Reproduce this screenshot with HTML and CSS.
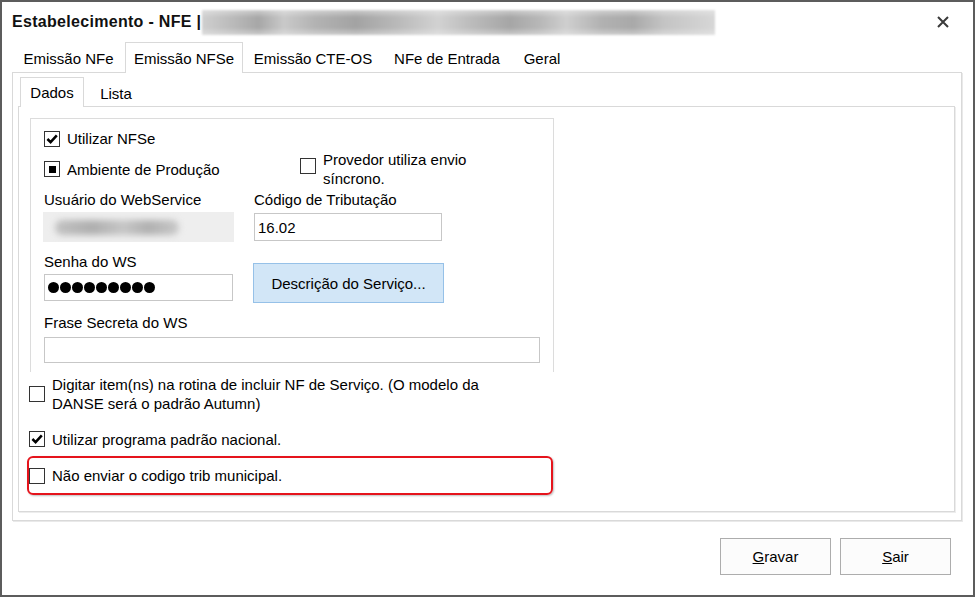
FILE: index.html
```html
<!DOCTYPE html>
<html lang="pt-BR">
<head>
<meta charset="utf-8">
<title>Estabelecimento - NFE</title>
<link rel="stylesheet" href="styles.css">
</head>
<body>
<div class="window">
  <div class="titlebar">
    <span class="title">Estabelecimento - NFE |</span>
    <span class="title-blur"></span>
    <svg class="close" width="12" height="12" viewBox="0 0 12 12"><path d="M1 1 L11 11 M11 1 L1 11" stroke="#3a3a3a" stroke-width="2" fill="none"/></svg>
  </div>

  <div class="tabctl">
    <div class="tabstrip">
      <div class="tab w1">Emissão NFe</div>
      <div class="tab active w2">Emissão NFSe</div>
      <div class="tab w3">Emissão CTE-OS</div>
      <div class="tab w4">NFe de Entrada</div>
      <div class="tab w5">Geral</div>
    </div>
    <div class="panel">
      <div class="subtabs">
        <div class="subtab active">Dados</div>
        <div class="subtab">Lista</div>
      </div>
      <div class="subpanel">
        <div class="group">
          <div class="chk r1">
            <span class="box"><svg width="14" height="14" viewBox="0 0 14 14"><path d="M2.4 7 L5.6 10.2 L11.8 3.4" stroke="#000" stroke-width="2.5" fill="none"/></svg></span>
            <span class="lbl">Utilizar NFSe</span>
          </div>
          <div class="row r2">
            <div class="col">
              <div class="chk tall">
                <span class="box"><span class="ind"></span></span>
                <span class="lbl">Ambiente de Produção</span>
              </div>
            </div>
            <div class="col">
              <div class="chk multi prov">
                <span class="box"></span>
                <span class="lbl">Provedor utiliza envio<br>síncrono.</span>
              </div>
            </div>
          </div>
          <div class="row r3">
            <div class="col field-label">Usuário do WebService</div>
            <div class="col field-label">Código de Tributação</div>
          </div>
          <div class="row r4">
            <div class="col"><div class="blurfield"><span class="blob"></span></div></div>
            <div class="col"><div class="input trib">16.02</div></div>
          </div>
          <div class="row r5">
            <div class="col">
              <div class="field-label senha">Senha do WS</div>
              <div class="input pass">
                <span class="dot"></span><span class="dot"></span><span class="dot"></span><span class="dot"></span><span class="dot"></span><span class="dot"></span><span class="dot"></span><span class="dot"></span><span class="dot"></span>
              </div>
            </div>
            <div class="col">
              <button class="btn-desc" type="button">Descrição do Serviço...</button>
            </div>
          </div>
          <div class="field-label frase">Frase Secreta do WS</div>
          <div class="input wide"></div>
        </div>

        <div class="chk multi2 digitar">
          <span class="box"></span>
          <span class="lbl">Digitar item(ns) na rotina de incluir NF de Serviço. (O modelo da<br>DANSE será o padrão Autumn)</span>
        </div>
        <div class="chk padrao">
          <span class="box"><svg width="14" height="14" viewBox="0 0 14 14"><path d="M2.4 7 L5.6 10.2 L11.8 3.4" stroke="#000" stroke-width="2.5" fill="none"/></svg></span>
          <span class="lbl">Utilizar programa padrão nacional.</span>
        </div>
        <div class="highlight">
          <div class="chk">
            <span class="box"></span>
            <span class="lbl">Não enviar o codigo trib municipal.</span>
          </div>
        </div>
      </div>
    </div>
  </div>

  <div class="footer">
    <button class="btn" type="button"><u>G</u>ravar</button>
    <button class="btn" type="button"><u>S</u>air</button>
  </div>
</div>
</body>
</html>
```

FILE: styles.css
```css
* { box-sizing: border-box; }
html, body { margin: 0; padding: 0; }
body {
  width: 975px;
  height: 597px;
  overflow: hidden;
  background: #fff;
  font-family: "Liberation Sans", Arial, sans-serif;
  font-size: 15px;
  color: #000;
}

.window {
  width: 975px;
  height: 597px;
  border: 2px solid #5c5c5c;
  background: #fff;
  display: flex;
  flex-direction: column;
}

/* title bar */
.titlebar {
  height: 40px;
  flex: none;
  display: flex;
  align-items: center;
  padding-left: 10px;
}
.title {
  font-weight: bold;
  font-size: 16px;
  letter-spacing: 0.3px;
  color: #111;
  white-space: nowrap;
}
.title-blur {
  width: 513px;
  height: 25px;
  margin-left: 1px;
  background:
    linear-gradient(180deg, rgba(235,235,235,.55) 0%, rgba(235,235,235,0) 30%, rgba(235,235,235,0) 70%, rgba(235,235,235,.55) 100%),
    linear-gradient(90deg, #cfcfcf 0%, #bababa 6%, #a7a7a7 11%, #c9c9c9 16%, #b3b3b3 22%, #a3a3a3 30%, #b9b9b9 38%, #d2d2d2 46%, #bdbdbd 52%, #a6a6a6 60%, #b8b8b8 66%, #cfcfcf 71%, #b1b1b1 78%, #a9a9a9 84%, #c4c4c4 90%, #d7d7d7 100%);
  filter: blur(1.2px);
}
.close {
  margin-left: auto;
  margin-right: 24px;
}

/* outer tab control */
.tabctl {
  margin-left: 10px;
  width: 950px;
  flex: none;
}
.tabstrip {
  display: flex;
  align-items: flex-end;
  height: 30px;
}
.tab {
  height: 28px;
  display: flex;
  align-items: center;
  justify-content: center;
  white-space: nowrap;
}
.tab.active {
  height: 31px;
  margin-bottom: -1px;
  border: 1px solid #d9d9d9;
  border-bottom: none;
  background: #fff;
  position: relative;
  z-index: 1;
}
.w1 { width: 113px; }
.w2 { width: 118px; }
.w3 { width: 140px; }
.w4 { width: 128px; }
.w5 { width: 62px; }

.panel {
  width: 950px;
  height: 449px;
  border: 1px solid #d9d9d9;
  box-shadow: 1px 1px 0 #e9e9e9;
}

.subtabs {
  display: flex;
  align-items: flex-end;
  height: 33px;
  margin-left: 7px;
}
.subtab {
  width: 64px;
  height: 26px;
  display: flex;
  align-items: center;
  justify-content: center;
}
.subtab.active {
  height: 30px;
  margin-bottom: -1px;
  border: 1px solid #d9d9d9;
  border-bottom: none;
  background: #fff;
  position: relative;
  z-index: 1;
}

.subpanel {
  margin-left: 5px;
  width: 937px;
  height: 406px;
  border: 1px solid #d9d9d9;
  box-shadow: 1px 1px 0 #ededed;
}

/* group */
.group {
  margin: 11px 0 0 11px;
  width: 524px;
  height: 254px;
  border: 1px solid #dcdcdc;
  border-bottom: none;
  padding: 11px 0 0 13px;
  overflow: hidden;
}
.row {
  display: flex;
  gap: 20px;
}
.col { width: 190px; }

/* checkboxes */
.chk {
  display: flex;
  align-items: center;
  gap: 7px;
  height: 17px;
  white-space: nowrap;
}
.box {
  width: 16px;
  height: 16px;
  flex: none;
  border: 1px solid #333;
  background: #fff;
  display: flex;
  align-items: center;
  justify-content: center;
}
.ind {
  width: 7px;
  height: 7px;
  background: #000;
}
.lbl { line-height: 19px; }

.r2 { margin-top: 3px; height: 38px; }
.chk.tall { height: 38px; }
.chk.multi { height: 38px; align-items: flex-start; }
.chk.multi .box { margin-top: 8px; }
.chk.prov { margin-left: 46px; }

.field-label { line-height: 19px; white-space: nowrap; }
.r3 { margin-top: 2px; }
.r4 { margin-top: 3px; height: 30px; }

.blurfield {
  width: 191px;
  height: 30px;
  margin-left: -1px;
  background: #eeeeee;
  display: flex;
  align-items: center;
  overflow: hidden;
}
.blob {
  width: 124px;
  height: 15px;
  margin-left: 12px;
  border-radius: 7px;
  background: linear-gradient(90deg, #c2c2c2, #aeaeae 30%, #c6c6c6 55%, #b0b0b0 75%, #c8c8c8);
  filter: blur(3px);
}

.input {
  border: 1px solid #c7c7c7;
  background: #fff;
  display: flex;
  align-items: center;
  padding-left: 3px;
}
.trib {
  width: 188px;
  height: 28px;
  margin-top: 1px;
}
.senha { margin-top: 10px; }
.pass {
  width: 189px;
  height: 27px;
  margin-top: 3px;
  gap: 1px;
}
.dot {
  width: 11px;
  height: 11px;
  border-radius: 50%;
  background: #000;
}
.btn-desc {
  margin-top: 21px;
  margin-left: -1px;
  width: 191px;
  height: 40px;
  border: 1px solid #96c1e8;
  background: #d2e6f7;
  font: inherit;
  color: #000;
  padding: 0;
}
.frase { margin-top: 10px; }
.wide {
  width: 496px;
  height: 26px;
  margin-top: 5px;
}

/* lower checkboxes */
.chk.multi2 {
  height: 38px;
}
.digitar { margin: 3px 0 0 10px; }
.padrao { margin: 17px 0 0 10px; height: 18px; }

.highlight {
  margin: 8px 0 0 8px;
  width: 526px;
  height: 39px;
  border: 2px solid #e5141c;
  border-radius: 6px;
  box-shadow: 1px 1px 2px rgba(0,0,0,.25);
  display: flex;
  align-items: center;
}

/* footer */
.footer {
  display: flex;
  justify-content: flex-end;
  gap: 9px;
  padding: 17px 22px 0 0;
}
.btn {
  width: 111px;
  height: 37px;
  border: 1px solid #adadad;
  background: #fcfcfc;
  font: inherit;
  color: #000;
  padding: 0;
}
```
